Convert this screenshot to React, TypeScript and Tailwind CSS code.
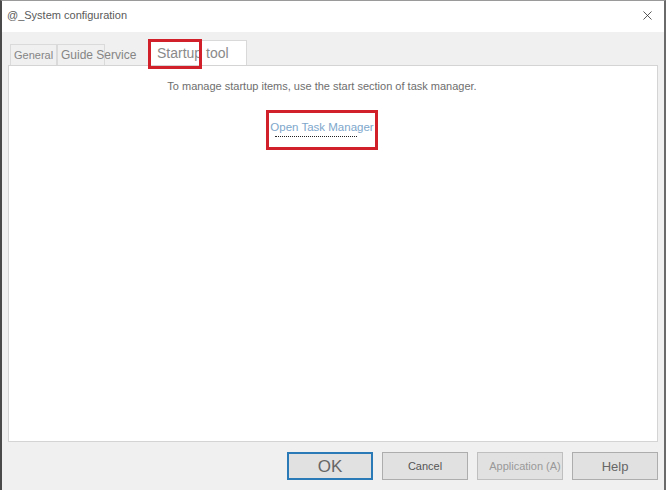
import { X } from "lucide-react";

const font = { fontFamily: "'Liberation Sans', Arial, sans-serif" };

function Tab({ label, width, size, active }: { label: string; width: string; size: string; active?: boolean }) {
  return (
    <div
      className={`${width} ${size} flex items-center whitespace-nowrap overflow-visible border border-b-0 ${
        active ? "h-[25px] bg-white border-[#d9d9d9] pl-[8px] text-[#8a8a8a]" : "h-[21px] bg-[#f0f0f0] border-[#dadada] pl-[3px] text-[#858585]"
      }`}
    >
      {label}
    </div>
  );
}

export default function App() {
  return (
    <div className="w-[666px] h-[490px] flex flex-col bg-[#f0f0f0] border-l-2 border-l-[#4a4a4a] border-r-2 border-r-[#6a6a6a] border-t border-t-[#9a9a9a] overflow-hidden" style={font}>
      {/* title bar */}
      <div className="h-[31px] bg-white flex items-center justify-between pl-[5px] pr-[9px] shrink-0">
        <span className="text-[11px] text-[#5a5a5a] -mt-[2px]">@_System configuration</span>
        <X className="w-[15px] h-[15px] text-[#333] -mt-[2px]" strokeWidth={1.3} />
      </div>

      {/* tabs */}
      <div className="relative flex items-end h-[33px] pl-[8px] shrink-0">
        <Tab label="General" width="w-[47px]" size="text-[11px]" />
        <Tab label="Guide Service" width="w-[48px]" size="text-[12px]" />
        <div className="w-[43px]" />
        <Tab label="Startup tool" width="w-[99px]" size="text-[14px]" active />
        <div className="absolute left-[146px] top-[7px] w-[54px] h-[30px] border-[3px] border-[#d2202a]" />
      </div>

      {/* panel */}
      <div className="mx-[6px] h-[377px] bg-white border border-[#d4d4d4] shrink-0 flex flex-col items-center pr-[22px]">
        <p className="mt-[12px] text-[11px] text-[#6e6e6e]">To manage startup items, use the start section of task manager.</p>
        <div className="mt-[15px] w-[112px] h-[40px] border-[3px] border-[#d2202a] flex flex-col items-center justify-center">
          <span className="text-[11.5px] text-[#7ea7cc] leading-none">Open Task Manager</span>
          <span className="mt-[3px] w-[82px] border-b border-dotted border-[#222] -ml-[12px]" />
        </div>
      </div>

      {/* buttons */}
      <div className="flex justify-end gap-[9px] pr-[6px] mt-[10px]">
        <button className="w-[86px] h-[28px] bg-[#e1e1e1] border-2 border-[#2b7ab8] text-[17px] text-[#666] leading-none">OK</button>
        <button className="w-[86px] h-[28px] bg-[#e1e1e1] border border-[#adadad] text-[11px] text-[#555] leading-none">Cancel</button>
        <button className="w-[86px] h-[28px] bg-[#e1e1e1] border border-[#bfbfbf] text-[11px] text-[#999] pl-[10px] leading-none">Application (A)</button>
        <button className="w-[86px] h-[28px] bg-[#e1e1e1] border border-[#adadad] text-[13px] text-[#666] leading-none">Help</button>
      </div>
    </div>
  );
}
